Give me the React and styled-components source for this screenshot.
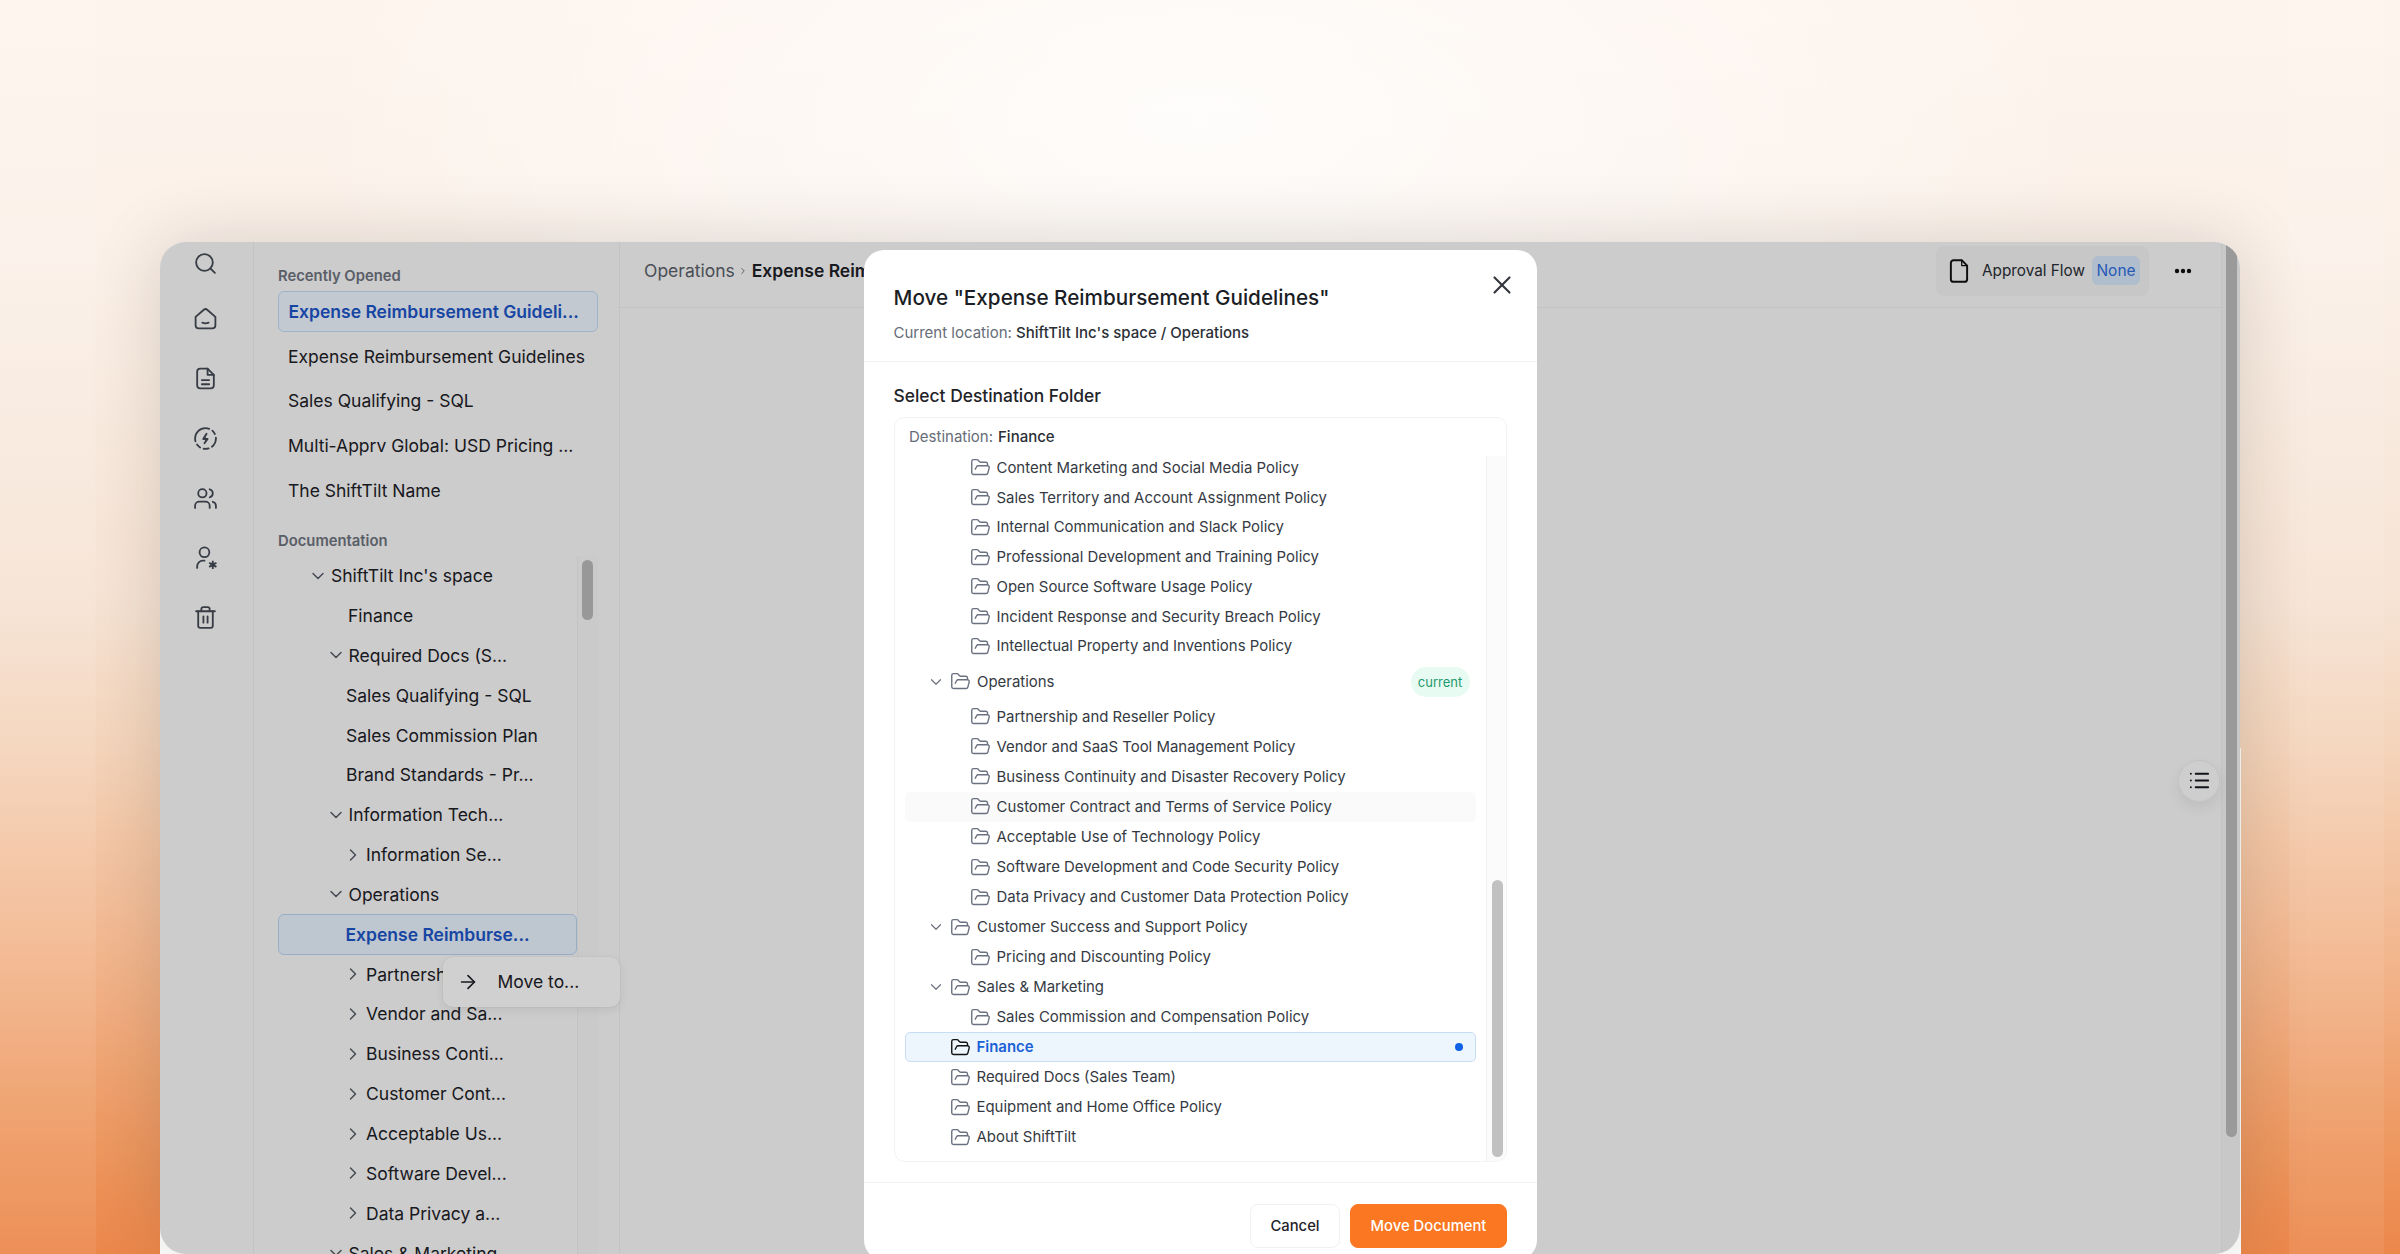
import React from 'react';
import styled, { createGlobalStyle } from 'styled-components';
import { ChevronDown, ChevronRight, FolderOpen, ArrowRight, X, List, Search, Trash2, Users } from 'lucide-react';

const Global = createGlobalStyle`
  html, body { margin: 0; padding: 0; height: 1254px; overflow: hidden; }
  * { box-sizing: border-box; }
  body { font-family: Inter, "Noto Sans", sans-serif; }
  #root { height: 1254px; }
`;

const Page = styled.div`
  height: 1254px;
  padding: 242px 0 0 160px;
  overflow: hidden;
  background:
    linear-gradient(90deg, rgba(255,255,255,.07) 0 96px, transparent 96px 2289px, rgba(255,255,255,.07) 2289px 2384px, transparent 2384px),
    radial-gradient(ellipse 900px 420px at 1200px 120px, rgba(255,255,255,.8), rgba(255,255,255,0) 100%),
    linear-gradient(180deg, #fdf4ed 0, #fbf1e9 240px, #f6e3d4 600px, #f4d5bc 740px, #f2b78f 950px, #ee9a63 1130px, #ec874b 1254px);
`;

const Shell = styled.div`
  width: 2081px;
  height: 1012px;
  background: linear-gradient(180deg, transparent 50%, #fff 50%);
`;

const Window = styled.div`
  position: relative;
  display: flex;
  width: 2080px;
  height: 1012px;
  border-radius: 26px;
  overflow: hidden;
  background: #fafafa;
  box-shadow: 0 0 70px rgba(40, 30, 20, .16);
`;

const Rail = styled.nav`
  flex: 0 0 94px;
  display: flex;
  flex-direction: column;
  align-items: center;
  gap: 34.8px;
  padding: 8.5px 2px 0 0;
  border-right: 1px solid #f0f0f0;
  color: #444a55;
  svg { display: block; width: 25px; height: 25px; stroke-width: 1.75; }
  svg:first-child { margin-bottom: -4px; }
`;

const Sidebar = styled.aside`
  flex: 0 0 366px;
  display: flex;
  flex-direction: column;
  padding: 24px 21px 0 24px;
  border-right: 1px solid #f0f0f0;
  min-height: 0;
`;

const SectionLabel = styled.div`
  font-size: 14.8px;
  line-height: 20px;
  font-weight: 600;
  color: #6f7480;
  margin-top: ${p => p.$top || 0}px;
`;

const RecentList = styled.div`
  display: grid;
  grid-auto-rows: 41px;
  gap: 3.7px;
  margin-top: 5px;
`;

const RecentItem = styled.div`
  display: flex;
  align-items: center;
  padding-left: 10px;
  font-size: 17.5px;
  color: #1d2127;
  border-radius: 6px;
  white-space: nowrap;
  ${p => p.$active && `
    background: #f0f7ff;
    border: 1.5px solid #c0dcf9;
    padding: 0 0 1px 9.5px;
    color: #1b55c9;
    font-weight: 600;
  `}
`;

const TreeWrap = styled.div`
  flex: 1;
  display: flex;
  min-height: 0;
  margin-top: 5px;
  overflow: hidden;
`;

const Tree = styled.div`
  flex: 0 0 300px;
  border-right: 1px solid #f0f0f0;
`;

const TreeGutter = styled.div`
  flex: 0 0 20px;
  padding: 4px 0 0 4px;
  background: #f8f8f8;
`;

const GutterThumb = styled.div`
  width: 11px;
  height: 60px;
  border-radius: 6px;
  background: #bbbbbb;
`;

const TreeRow = styled.div`
  height: 39.85px;
  display: flex;
  align-items: center;
  gap: 3px;
  padding-left: ${p => p.$pad}px;
  font-size: 17.5px;
  color: #1d2127;
  white-space: nowrap;
  svg { flex: 0 0 20px; width: 20px; height: 20px; color: #555b66; stroke-width: 1.75; }
  ${p => p.$active && `
    background: #e9f3fe;
    border: 1.5px solid #b9d6f6;
    border-radius: 6px;
    color: #1b55c9;
    font-weight: 600;
    height: 41px;
    margin-bottom: -1.15px;
    padding-left: ${p.$pad - 1.5}px;
  `}
`;

const RowMenu = styled.div`
  position: absolute;
  left: 283px;
  top: 714.7px;
  width: 177px;
  height: 50px;
  display: flex;
  align-items: center;
  gap: 18.5px;
  padding-left: 14px;
  background: #fff;
  border-radius: 10px;
  box-shadow: 0 3px 10px rgba(0,0,0,.08), 0 0 0 1px rgba(0,0,0,.02);
  font-size: 17.5px;
  color: #1d2127;
  svg { width: 22px; height: 22px; stroke-width: 1.8; }
`;

const Main = styled.main`
  position: relative;
  flex: 0 0 1602px;
  border-right: 1px solid #f0f0f0;
`;

const Header = styled.header`
  height: 66px;
  display: flex;
  align-items: center;
  justify-content: space-between;
  padding: 0 29px 8px 24px;
  border-bottom: 1px solid #f0f0f0;
`;

const Crumbs = styled.div`
  display: flex;
  align-items: center;
  gap: 3.5px;
  font-size: 17.5px;
  color: #5b606b;
  white-space: nowrap;
  svg { width: 10px; height: 10px; }
  strong { color: #1d2127; font-weight: 600; }
`;

const HeadRight = styled.div`
  display: flex;
  align-items: center;
  gap: 25px;
`;

const FlowPill = styled.div`
  width: 213px;
  height: 50px;
  display: flex;
  align-items: center;
  padding: 0 9px 0 10px;
  border-radius: 8px;
  background: #f4f4f4;
  font-size: 15.3px;
  color: #2a2e35;
  white-space: nowrap;
  svg { flex: 0 0 26px; width: 26px; height: 26px; color: #111; margin-right: 10px; }
`;

const NoneChip = styled.span`
  margin-left: auto;
  height: 29px;
  width: 48px;
  display: flex;
  align-items: center;
  justify-content: center;
  border-radius: 6px;
  background: #d8e8fc;
  color: #2f6fe0;
  font-size: 15.5px;
`;

const Dots = styled.svg`
  width: 18px;
  height: 6px;
  display: block;
  fill: #111;
`;

const TocButton = styled.button`
  position: absolute;
  right: 1px;
  top: 517.5px;
  width: 42px;
  height: 42px;
  border: 1px solid #efefef;
  border-radius: 50%;
  background: #fdfdfd;
  box-shadow: 0 6px 14px rgba(0,0,0,.07);
  display: flex;
  align-items: center;
  justify-content: center;
  padding: 0;
  color: #15181e;
  svg { width: 23px; height: 23px; }
`;

const PageGutter = styled.div`
  flex: 1;
  padding-left: 4px;
  background: #f6f6f6;
`;

const PageThumb = styled.div`
  width: 11px;
  height: 895px;
  border-radius: 0 0 6px 6px;
  background: #bdbdbd;
`;

const Overlay = styled.div`
  position: absolute;
  inset: 0;
  background: rgba(0, 0, 0, .185);
`;

const Modal = styled.section`
  position: absolute;
  left: 703.5px;
  top: 8px;
  width: 673.5px;
  height: 1010px;
  display: flex;
  flex-direction: column;
  background: #fff;
  border-radius: 20px;
`;

const ModalHead = styled.div`
  position: relative;
  height: 112px;
  padding: 33px 30px 0;
  border-bottom: 1px solid #f1f1f3;
`;

const ModalTitle = styled.h2`
  margin: 0;
  font-size: 20.7px;
  line-height: 30px;
  font-weight: 500;
  color: #1b1e24;
  white-space: nowrap;
`;

const Location = styled.div`
  margin-top: 10px;
  font-size: 15px;
  line-height: 20px;
  color: #666c78;
  strong { color: #2b2f36; font-weight: 500; }
`;

const CloseBtn = styled.button`
  position: absolute;
  right: 20.5px;
  top: 20px;
  width: 30px;
  height: 30px;
  padding: 0;
  border: 0;
  background: none;
  color: #33373e;
  display: flex;
  align-items: center;
  justify-content: center;
  svg { width: 30px; height: 30px; stroke-width: 1.7; }
`;

const ModalBody = styled.div`
  flex: 0 0 auto;
  padding: 22px 30px 0;
`;

const BodyTitle = styled.h3`
  margin: 0 0 9px;
  font-size: 17.4px;
  line-height: 24px;
  font-weight: 500;
  color: #1f2329;
`;

const PickerBox = styled.div`
  height: 745px;
  display: flex;
  flex-direction: column;
  border: 1px solid #f3f3f4;
  border-radius: 10px;
  overflow: hidden;
`;

const Destination = styled.div`
  flex: 0 0 38px;
  display: flex;
  align-items: center;
  gap: 5px;
  padding: 0 0 1px 14.5px;
  font-size: 15px;
  color: #666c78;
  strong { color: #2b2f36; font-weight: 500; }
`;

const PickerScroll = styled.div`
  flex: 1;
  display: flex;
  min-height: 0;
`;

const FolderList = styled.div`
  flex: 0 0 591px;
  padding: 0 10px;
  overflow: hidden;
`;

const Group = styled.div`
  display: grid;
  grid-auto-rows: ${p => p.$row}px;
  margin-top: ${p => p.$top || 0}px;
`;

const FolderRow = styled.div`
  display: flex;
  align-items: center;
  padding-left: ${p => p.$pad}px;
  font-size: 14.95px;
  color: #353a43;
  white-space: nowrap;
  border-radius: 5px;
  ${p => p.$hover && 'background: #fafafa;'}
  ${p => p.$selected && `
    background: #edf5fd;
    border: 1px solid #c7ddf6;
    padding-left: ${p.$pad - 1}px;
    color: #1a62d6;
    font-weight: 600;
  `}
`;

const Caret = styled(ChevronDown)`
  flex: 0 0 18px;
  width: 18px;
  height: 18px;
  color: #6f7480;
  margin-right: 5px;
  stroke-width: 1.6;
`;

const FolderIcon = styled(FolderOpen)`
  flex: 0 0 21px;
  width: 21px;
  height: 21px;
  margin-right: 6px;
  color: ${p => p.$dark ? '#111' : '#6a7180'};
  stroke-width: 1.6;
`;

const OpsRow = styled(FolderRow)`
  height: 30px;
  margin: 5.5px 0 5px;
`;

const CurrentBadge = styled.span`
  margin-left: auto;
  margin-right: 6px;
  width: 59px;
  height: 30px;
  display: flex;
  align-items: center;
  justify-content: center;
  border-radius: 15px;
  background: #e8fbf3;
  color: #1d9a6c;
  font-size: 13px;
`;

const SelectDot = styled.span`
  margin-left: auto;
  margin-right: 12px;
  width: 8px;
  height: 8px;
  border-radius: 50%;
  background: #0d62e6;
`;

const PickerGutter = styled.div`
  flex: 1;
  padding: 424px 0 0 5px;
  border-left: 1px solid #f1f1f1;
  background: #fbfbfb;
`;

const PickerThumb = styled.div`
  width: 11px;
  height: 277px;
  border-radius: 6px;
  background: #c1c1c1;
`;

const ModalFoot = styled.div`
  margin-top: 20px;
  padding: 21px 30px 0;
  display: flex;
  justify-content: flex-end;
  gap: 10px;
  border-top: 1px solid #f1f1f3;
`;

const FootButton = styled.button`
  height: 44px;
  width: ${p => p.$w}px;
  padding: 0;
  border-radius: 8px;
  font: 500 14.8px Inter, sans-serif;
  border: 1px solid ${p => p.$primary ? '#fb7722' : '#f1f1f2'};
  background: ${p => p.$primary ? '#fb7722' : '#fff'};
  color: ${p => p.$primary ? '#fff' : '#1f2329'};
`;

const Ico = ({ children }) => (
  <svg viewBox="0 0 24 24" fill="none" stroke="currentColor" strokeWidth="1.75" strokeLinecap="round" strokeLinejoin="round">{children}</svg>
);

const HomeIcon = () => (
  <Ico>
    <path d="M2.5 10.5 10.4 3.6a2.4 2.4 0 0 1 3.2 0l7.9 6.9v8a3 3 0 0 1-3 3h-13a3 3 0 0 1-3-3z" />
    <path d="M9 16c1.8 .8 4.2 .8 6 0" />
  </Ico>
);
const DocIcon = () => (
  <Ico>
    <path d="M14 2.500H7a3 3 0 0 0-3 3v13a3 3 0 0 0 3 3h10a3 3 0 0 0 3-3V8.500z" />
    <path d="M14 2.500v6h6" />
    <path d="M8.500 13.500h7M8.500 17.500h7" />
  </Ico>
);
const BoltCircle = () => (
  <Ico>
    <circle cx="12" cy="12" r="10" strokeDasharray="9 3.500 5 3.500 4 3.500 22 3.500 4 3.500" />
    <path d="M13 7.500 9.800 12.500H14L11 16.500" strokeWidth="1.800" fill="currentColor" />
  </Ico>
);
const UserGear = () => (
  <Ico>
    <circle cx="11" cy="7" r="4.700" />
    <path d="M4 22v-1.500a5.500 5.500 0 0 1 5.500-5.500h1.500" />
    <g strokeWidth="1.700" strokeLinecap="butt">
      <circle cx="19" cy="19" r="2.200" fill="currentColor" stroke="none" />
      <path d="M19 15v8M15.500 17l7 4M22.500 17l-7 4" />
    </g>
  </Ico>
);
const PageFile = () => (
  <svg viewBox="0 0 24 24" fill="none" stroke="currentColor" strokeWidth="1.8" strokeLinejoin="round" strokeLinecap="round">
    <path d="M14.500 2H7a2.500 2.500 0 0 0-2.500 2.500v15A2.500 2.500 0 0 0 7 22h10a2.500 2.500 0 0 0 2.500-2.500V7z" />
    <path d="M14.500 2v5h5" strokeWidth="1.200" />
  </svg>
);

const folders1 = [
  'Content Marketing and Social Media Policy',
  'Sales Territory and Account Assignment Policy',
  'Internal Communication and Slack Policy',
  'Professional Development and Training Policy',
  'Open Source Software Usage Policy',
  'Incident Response and Security Breach Policy',
  'Intellectual Property and Inventions Policy',
];
const folders2 = [
  'Partnership and Reseller Policy',
  'Vendor and SaaS Tool Management Policy',
  'Business Continuity and Disaster Recovery Policy',
  'Customer Contract and Terms of Service Policy',
  'Acceptable Use of Technology Policy',
  'Software Development and Code Security Policy',
  'Data Privacy and Customer Data Protection Policy',
];
const recents = ['Expense Reimbursement Guidelines', 'Sales Qualifying - SQL', 'Multi-Apprv Global: USD Pricing ...', 'The ShiftTilt Name'];

const treeRows = [
  { t: "ShiftTilt Inc's space", p: 30, c: 'd' },
  { t: 'Finance', p: 70 },
  { t: 'Required Docs (S...', p: 47.500, c: 'd' },
  { t: 'Sales Qualifying - SQL', p: 68 },
  { t: 'Sales Commission Plan', p: 68 },
  { t: 'Brand Standards - Pr...', p: 68 },
  { t: 'Information Tech...', p: 47.500, c: 'd' },
  { t: 'Information Se...', p: 65, c: 'r' },
  { t: 'Operations', p: 47.500, c: 'd' },
  { t: 'Expense Reimburse...', p: 68, active: true },
  { t: 'Partnership a...', p: 65, c: 'r' },
  { t: 'Vendor and Sa...', p: 65, c: 'r' },
  { t: 'Business Conti...', p: 65, c: 'r' },
  { t: 'Customer Cont...', p: 65, c: 'r' },
  { t: 'Acceptable Us...', p: 65, c: 'r' },
  { t: 'Software Devel...', p: 65, c: 'r' },
  { t: 'Data Privacy a...', p: 65, c: 'r' },
  { t: 'Sales & Marketing', p: 47.500, c: 'd' },
];

const Folder = ({ pad, name, hover }) => (
  <FolderRow $pad={pad} $hover={hover}><FolderIcon />{name}</FolderRow>
);
const Parent = ({ name }) => (
  <FolderRow $pad={22.500}><Caret /><FolderIcon />{name}</FolderRow>
);

export default function App() {
  return (
    <Page>
      <Global />
      <Shell>
        <Window>
          <Rail>
            <Search />
            <HomeIcon />
            <DocIcon />
            <BoltCircle />
            <Users />
            <UserGear />
            <Trash2 />
          </Rail>
          <Sidebar>
            <SectionLabel>Recently Opened</SectionLabel>
            <RecentList>
              <RecentItem $active>Expense Reimbursement Guideli...</RecentItem>
              {recents.map(r => <RecentItem key={r}>{r}</RecentItem>)}
            </RecentList>
            <SectionLabel $top={20}>Documentation</SectionLabel>
            <TreeWrap>
              <Tree>
                {treeRows.map(r => (
                  <TreeRow key={r.t} $pad={r.p} $active={r.active}>
                    {r.c === 'd' && <ChevronDown />}
                    {r.c === 'r' && <ChevronRight />}
                    {r.t}
                  </TreeRow>
                ))}
              </Tree>
              <TreeGutter><GutterThumb /></TreeGutter>
            </TreeWrap>
          </Sidebar>
          <Main>
            <Header>
              <Crumbs>Operations <ChevronRight /> <strong>Expense Reimbursement Guidelines</strong></Crumbs>
              <HeadRight>
                <FlowPill><PageFile />Approval Flow<NoneChip>None</NoneChip></FlowPill>
                <Dots viewBox="0 0 18 6"><circle cx="3" cy="3" r="2.200" /><circle cx="9" cy="3" r="2.200" /><circle cx="15" cy="3" r="2.200" /></Dots>
              </HeadRight>
            </Header>
            <TocButton><List /></TocButton>
          </Main>
          <PageGutter><PageThumb /></PageGutter>
          <RowMenu><ArrowRight />Move to...</RowMenu>
          <Overlay />
          <Modal>
            <ModalHead>
              <ModalTitle>Move "Expense Reimbursement Guidelines"</ModalTitle>
              <Location>Current location: <strong>ShiftTilt Inc's space / Operations</strong></Location>
              <CloseBtn><X /></CloseBtn>
            </ModalHead>
            <ModalBody>
              <BodyTitle>Select Destination Folder</BodyTitle>
              <PickerBox>
                <Destination>Destination: <strong>Finance</strong></Destination>
                <PickerScroll>
                  <FolderList>
                    <Group $row={29.750} $top={-3}>
                      {folders1.map(f => <Folder key={f} pad={65} name={f} />)}
                    </Group>
                    <OpsRow $pad={22.500}><Caret /><FolderIcon />Operations<CurrentBadge>current</CurrentBadge></OpsRow>
                    <Group $row={30.050}>
                      {folders2.map(f => <Folder key={f} pad={65} name={f} hover={f.startsWith('Customer Contract')} />)}
                      <Parent name="Customer Success and Support Policy" />
                      <Folder pad={65} name="Pricing and Discounting Policy" />
                      <Parent name="Sales &amp; Marketing" />
                      <Folder pad={65} name="Sales Commission and Compensation Policy" />
                      <FolderRow $pad={45} $selected><FolderIcon $dark />Finance<SelectDot /></FolderRow>
                      <Folder pad={45} name="Required Docs (Sales Team)" />
                      <Folder pad={45} name="Equipment and Home Office Policy" />
                      <Folder pad={45} name="About ShiftTilt" />
                    </Group>
                  </FolderList>
                  <PickerGutter><PickerThumb /></PickerGutter>
                </PickerScroll>
              </PickerBox>
            </ModalBody>
            <ModalFoot>
              <FootButton $w={90}>Cancel</FootButton>
              <FootButton $w={157} $primary>Move Document</FootButton>
            </ModalFoot>
          </Modal>
        </Window>
      </Shell>
    </Page>
  );
}
